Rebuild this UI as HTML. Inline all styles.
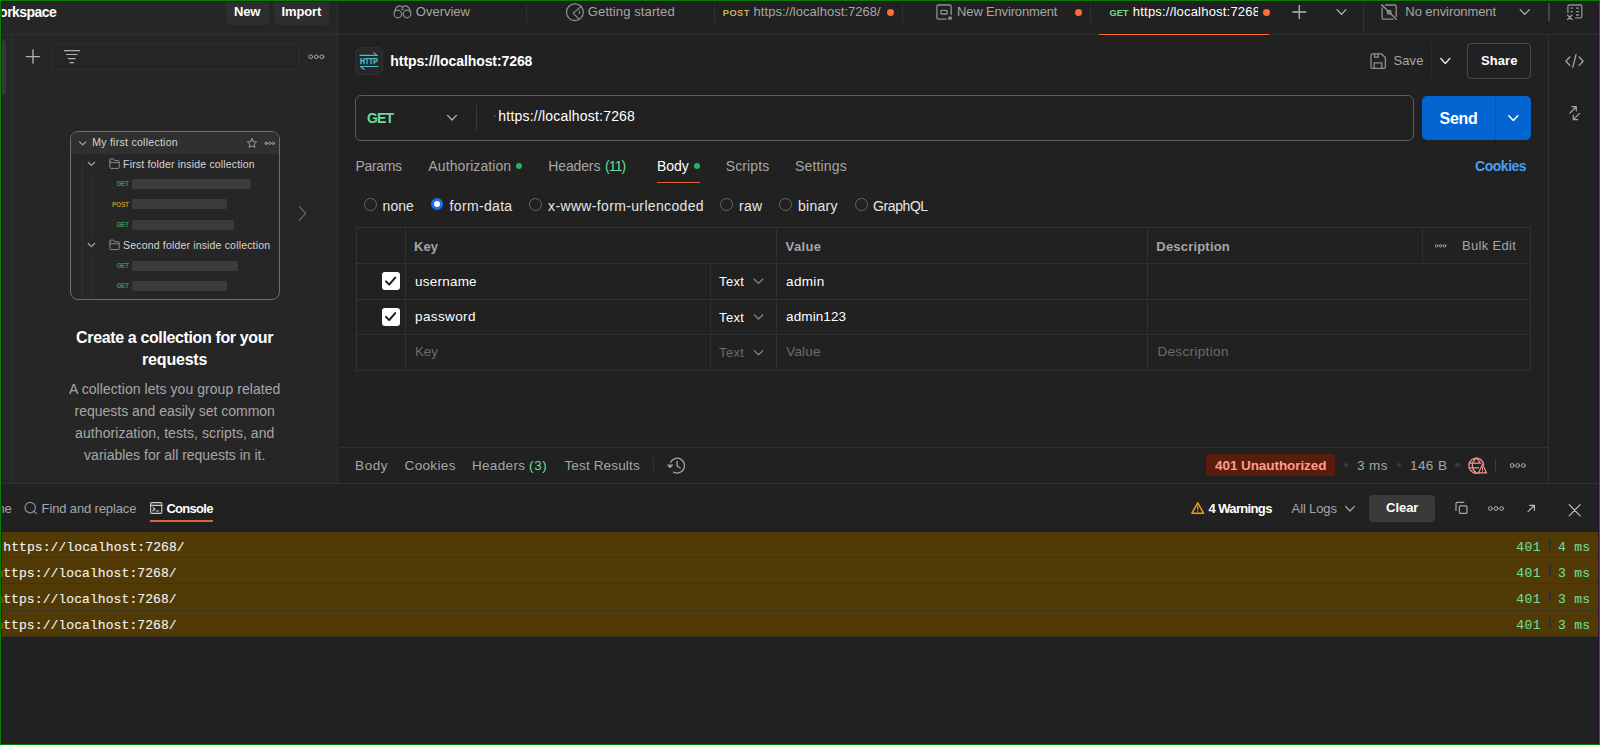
<!DOCTYPE html>
<html lang="en"><head><meta charset="utf-8"><title>Postman</title>
<style>
html,body{margin:0;padding:0;background:#212121;}
body{width:1600px;height:745px;overflow:hidden;}
#app{position:relative;width:1600px;height:745px;overflow:hidden;background:#212121;font-family:"Liberation Sans",sans-serif;}
.t{position:absolute;white-space:pre;line-height:1;}
.s{font-family:"Liberation Sans",sans-serif;}
.m{font-family:"Liberation Mono",monospace;-webkit-text-stroke:0.12px currentColor;}
.b{position:absolute;box-sizing:border-box;}
svg{position:absolute;overflow:visible;}
.ln{position:absolute;background:#303030;}

</style></head>
<body>
<div id="app">
<!-- panels -->
<div class="b" style="left:0;top:0;width:337px;height:483px;background:#262626;"></div>
<!-- horizontal line under top bar -->
<div class="ln" style="left:0;top:34px;width:1600px;height:1px;"></div>
<!-- sidebar / main divider -->
<div class="ln" style="left:337px;top:0;width:1px;height:483px;"></div>
<!-- left rail -->
<div class="ln" style="left:11px;top:35px;width:1px;height:448px;"></div>
<div class="b" style="left:-4px;top:40px;width:10px;height:55px;background:#383838;border-radius:4px;"></div>
<!-- New / Import buttons -->
<div class="b" style="left:226px;top:0;width:43px;height:24.5px;background:#2e2e2e;border-radius:4px;"></div>
<div class="b" style="left:273.5px;top:0;width:55.5px;height:24.5px;background:#2e2e2e;border-radius:4px;"></div>
<!-- sidebar search -->
<div class="b" style="left:51px;top:43px;width:247.5px;height:26.5px;border:1px solid #2f2f2f;border-radius:3px;background:#252525;"></div>
<!-- card -->
<div class="b" style="left:70px;top:131px;width:210px;height:169px;border:1px solid #6e6e6e;border-radius:8px;overflow:hidden;background:#262626;">
  <div class="b" style="left:0;top:0;width:209px;height:21.5px;background:#303030;"></div>
  <div class="b" style="left:11px;top:21.5px;width:1px;height:150px;background:#2f2f2f;"></div>
  <div class="b" style="left:20px;top:42px;width:1px;height:62px;background:#303030;"></div>
  <div class="b" style="left:20px;top:123.5px;width:1px;height:50px;background:#303030;"></div>
</div>
<div class="b" style="left:131.9px;top:179px;width:119.4px;height:10px;background:#3b3b3b;border-radius:2px;"></div>
<div class="b" style="left:131.9px;top:199.3px;width:94.9px;height:10px;background:#3b3b3b;border-radius:2px;"></div>
<div class="b" style="left:131.9px;top:219.7px;width:102.3px;height:10px;background:#3b3b3b;border-radius:2px;"></div>
<div class="b" style="left:131.9px;top:260.8px;width:106.6px;height:10px;background:#3b3b3b;border-radius:2px;"></div>
<div class="b" style="left:131.9px;top:281.2px;width:94.9px;height:10px;background:#3b3b3b;border-radius:2px;"></div>

<!-- tab dividers -->
<div class="ln" style="left:526px;top:4px;width:1px;height:18px;background:#303030;"></div>
<div class="ln" style="left:714px;top:4px;width:1px;height:18px;background:#303030;"></div>
<div class="ln" style="left:902px;top:4px;width:1px;height:18px;background:#303030;"></div>
<div class="ln" style="left:1090px;top:4px;width:1px;height:18px;background:#303030;"></div>
<div class="ln" style="left:1363px;top:0;width:1px;height:34px;"></div>
<div class="ln" style="left:1547.5px;top:3px;width:2px;height:18px;background:#454545;"></div>
<!-- active tab underline -->
<div class="b" style="left:1099px;top:33.5px;width:170px;height:1.5px;background:#ff6c37;"></div>
<!-- tab dots -->
<div class="b" style="left:887px;top:8.5px;width:7px;height:7px;border-radius:50%;background:#ff6c37;"></div>
<div class="b" style="left:1074.7px;top:8.5px;width:7px;height:7px;border-radius:50%;background:#ff6c37;"></div>
<div class="b" style="left:1262.7px;top:8.5px;width:7px;height:7px;border-radius:50%;background:#ff6c37;"></div>

<!-- right vertical line -->
<div class="ln" style="left:1548px;top:35px;width:1px;height:448px;"></div>

<!-- HTTP icon box -->
<div class="b" style="left:355px;top:47px;width:28px;height:28px;background:#282828;border:1px solid #303030;border-radius:5px;"></div>
<!-- save divider, share -->
<div class="ln" style="left:1431px;top:43px;width:1px;height:35px;background:#2a2a2a;"></div>
<div class="b" style="left:1467px;top:43px;width:64px;height:36px;border:1px solid #4a4a4a;border-radius:4px;"></div>

<!-- URL bar -->
<div class="b" style="left:355px;top:95px;width:1058.7px;height:45.5px;border:1px solid #5c5c5c;border-radius:6px;"></div>
<div class="ln" style="left:476px;top:105px;width:1px;height:25.5px;background:#3a3a3a;"></div>
<div class="b" style="left:493.5px;top:115px;width:2px;height:2px;background:#555;border-radius:1px;"></div>
<!-- Send -->
<div class="b" style="left:1421.7px;top:96px;width:109.3px;height:43.5px;background:#0265d2;border-radius:5px;"></div>
<div class="ln" style="left:1495px;top:96px;width:1px;height:43.5px;background:#0a55ad;"></div>

<!-- req tab dots + underline -->
<div class="b" style="left:516px;top:163px;width:6px;height:6px;border-radius:50%;background:#1fb866;"></div>
<div class="b" style="left:693.5px;top:163px;width:6px;height:6px;border-radius:50%;background:#1fb866;"></div>
<div class="b" style="left:657px;top:181.6px;width:43px;height:1.6px;background:#e0623a;"></div>

<!-- radios -->
<div class="b" style="left:364px;top:198px;width:13px;height:13px;border:1px solid #666;border-radius:50%;"></div>
<div class="b" style="left:431.3px;top:198px;width:12px;height:12px;border:3.5px solid #1a6ff0;background:#fff;border-radius:50%;"></div>
<div class="b" style="left:529px;top:198px;width:13px;height:13px;border:1px solid #666;border-radius:50%;"></div>
<div class="b" style="left:720.2px;top:198px;width:13px;height:13px;border:1px solid #666;border-radius:50%;"></div>
<div class="b" style="left:778.7px;top:198px;width:13px;height:13px;border:1px solid #666;border-radius:50%;"></div>
<div class="b" style="left:854.5px;top:198px;width:13px;height:13px;border:1px solid #666;border-radius:50%;"></div>

<!-- table -->
<div class="ln" style="left:355px;top:227px;width:1176px;height:1px;"></div>
<div class="ln" style="left:355px;top:263px;width:1176px;height:1px;"></div>
<div class="ln" style="left:355px;top:299px;width:1176px;height:1px;"></div>
<div class="ln" style="left:355px;top:334px;width:1176px;height:1px;"></div>
<div class="ln" style="left:355px;top:370px;width:1176px;height:1px;"></div>
<div class="ln" style="left:355.5px;top:227px;width:1px;height:144px;"></div>
<div class="ln" style="left:404.5px;top:227px;width:1px;height:144px;"></div>
<div class="ln" style="left:709.5px;top:263px;width:1px;height:108px;"></div>
<div class="ln" style="left:776px;top:227px;width:1px;height:144px;"></div>
<div class="ln" style="left:1146.5px;top:227px;width:1px;height:144px;"></div>
<div class="ln" style="left:1422px;top:227px;width:1px;height:36px;"></div>
<div class="ln" style="left:1530px;top:227px;width:1px;height:144px;"></div>
<!-- checkboxes -->
<div class="b" style="left:381.5px;top:272px;width:18px;height:18px;background:#fff;border-radius:3px;"></div>
<div class="b" style="left:381.5px;top:307.5px;width:18px;height:18px;background:#fff;border-radius:3px;"></div>

<!-- response bar lines -->
<div class="ln" style="left:339px;top:447px;width:1209px;height:1px;"></div>
<div class="ln" style="left:0;top:483px;width:1600px;height:1px;"></div>
<div class="ln" style="left:653px;top:457px;width:1px;height:16px;background:#303030;"></div>
<!-- status badge -->
<div class="b" style="left:1206px;top:454px;width:129px;height:21.5px;background:#5a1c0d;border-radius:4px;"></div>
<div class="b" style="left:1344.2px;top:463.1px;width:4.2px;height:4.2px;border-radius:50%;background:#3a3a3a;"></div>
<div class="b" style="left:1396.9px;top:463.1px;width:4.2px;height:4.2px;border-radius:50%;background:#3a3a3a;"></div>
<div class="b" style="left:1455.4px;top:463.1px;width:4.2px;height:4.2px;border-radius:50%;background:#3a3a3a;"></div>
<div class="ln" style="left:1495px;top:458.5px;width:1px;height:14px;background:#3a3a3a;"></div>

<!-- bottom header -->
<div class="b" style="left:149.5px;top:520.3px;width:63.5px;height:1.5px;background:#e0623a;"></div>
<div class="b" style="left:1369px;top:495px;width:66px;height:26.5px;background:#3a3a3a;border-radius:4px;"></div>

<!-- console rows -->
<div class="b" style="left:0;top:532px;width:1600px;height:104.5px;background:#3a3420;"></div>
<div class="b" style="left:0;top:532px;width:1600px;height:25.3px;background:#513a05;"></div>
<div class="b" style="left:0;top:558.2px;width:1600px;height:25.3px;background:#513a05;"></div>
<div class="b" style="left:0;top:584.4px;width:1600px;height:25.3px;background:#513a05;"></div>
<div class="b" style="left:0;top:610.6px;width:1600px;height:25.6px;background:#513a05;"></div>
<div class="b" style="left:1548.6px;top:539px;width:2px;height:11px;background:#2f3138;"></div>
<div class="b" style="left:1548.6px;top:565px;width:2px;height:11px;background:#2f3138;"></div>
<div class="b" style="left:1548.6px;top:591px;width:2px;height:11px;background:#2f3138;"></div>
<div class="b" style="left:1548.6px;top:617px;width:2px;height:11px;background:#2f3138;"></div>
<svg class="ic" width="1600" height="745" viewBox="0 0 1600 745" style="left:0;top:0;z-index:5;" fill="none" stroke-linecap="round" stroke-linejoin="round">
<!-- sidebar plus -->
<g stroke="#b5b5b5" stroke-width="1.3"><path d="M26.4 56.6H39.6M33 50V63.2"/></g>
<!-- filter -->
<g stroke="#b0b0b0" stroke-width="1.2" stroke-linecap="butt"><path d="M63.8 50.6H79.9M65.9 54.5H77.4M67.9 58.7H75.6M69.6 62.6H73.9"/></g>
<!-- sidebar ooo -->
<g stroke="#a6a6a6" stroke-width="1"><circle cx="310.7" cy="56.8" r="1.9"/><circle cx="316.3" cy="56.8" r="1.9"/><circle cx="321.9" cy="56.8" r="1.9"/></g>
<!-- card chevrons -->
<g stroke="#a6a6a6" stroke-width="1.2"><path d="M79.6 141.8L82.7 144.9L85.8 141.8"/><path d="M88.2 162.3L91.4 165.4L94.6 162.3"/><path d="M88.2 243.5L91.4 246.6L94.6 243.5"/></g>
<!-- card folders -->
<g stroke="#8a8a8a" stroke-width="1"><path d="M109.9 160.1V167.4Q109.9 168.4 110.9 168.4H118.2Q119.2 168.4 119.2 167.4V161.6Q119.2 160.6 118.2 160.6H114.6L113.4 158.9H110.9Q109.9 158.9 109.9 160.1ZM109.9 162.6H119.2"/>
<path d="M109.9 241.3V248.6Q109.9 249.6 110.9 249.6H118.2Q119.2 249.6 119.2 248.6V242.8Q119.2 241.8 118.2 241.8H114.6L113.4 240.1H110.9Q109.9 240.1 109.9 241.3ZM109.9 243.8H119.2"/></g>
<!-- card star + ooo -->
<g stroke="#a6a6a6" stroke-width="0.9"><path d="M252 138.6L253.4 141.6L256.6 142L254.2 144.2L254.9 147.4L252 145.8L249.1 147.4L249.8 144.2L247.4 142L250.6 141.6Z"/>
<circle cx="266" cy="143.3" r="1.2"/><circle cx="269.6" cy="143.3" r="1.2"/><circle cx="273.2" cy="143.3" r="1.2"/></g>
<!-- sidebar right chevron -->
<path d="M299.3 206.4L305.6 213.3L299.3 220.2" stroke="#6b6b6b" stroke-width="1.2"/>

<!-- binoculars -->
<g stroke="#8f8f8f" stroke-width="1.2"><circle cx="397.9" cy="14" r="3.8"/><circle cx="407.1" cy="14" r="3.8"/><path d="M394.3 12.6C394.9 9 396.8 6 399.6 5.8C401 5.7 402 6.6 402.5 7.4C403 6.6 404 5.7 405.4 5.8C408.2 6 410.1 9 410.7 12.6"/><path d="M402 9.3H403" stroke-width="1.4"/></g>
<!-- getting started -->
<g stroke="#8f8f8f" stroke-width="1.2"><circle cx="574.9" cy="12.2" r="8.4"/><path d="M581.2 6.5L573.1 13.1L578.6 18.7M579.5 11.2V13.4"/></g>
<!-- env icon -->
<g stroke="#8f8f8f" stroke-width="1.3"><path d="M951.2 14.5V6.4Q951.2 5 949.8 5H938.3Q936.9 5 936.9 6.4V17.7Q936.9 19.1 938.3 19.1H946"/><rect x="940.9" y="10.4" width="6.2" height="3.6" rx="0.6"/><rect x="948.2" y="16.6" width="3.6" height="3.1" fill="#8f8f8f" stroke="none"/></g>
<!-- tab plus + chevron -->
<g stroke="#b5b5b5" stroke-width="1.3"><path d="M1292.8 12H1305.8M1299.3 5.5V18.5"/><path d="M1337 9.6L1341.5 14.4L1346 9.6"/></g>
<!-- no env -->
<g stroke="#8f8f8f" stroke-width="1.3"><path d="M1396.2 16.5V6.4Q1396.2 5 1394.8 5H1385.5M1382.1 8V17.7Q1382.1 19.1 1383.5 19.1H1393"/><rect x="1387.4" y="10.6" width="3.4" height="3.2" rx="0.5"/><path d="M1381.7 4.8L1396.4 19.4" stroke="#a0a0a0"/></g>
<g stroke="#b5b5b5" stroke-width="1.3"><path d="M1520.2 9.6L1524.8 14.4L1529.4 9.6"/></g>
<!-- top right icon -->
<g stroke="#8f8f8f" stroke-width="1.3"><path d="M1567.9 12.5V6.4Q1567.9 5 1569.3 5H1580.4Q1581.8 5 1581.8 6.4V16.4Q1581.8 17.8 1580.4 17.8H1575.5"/><path d="M1570.5 8.2H1573M1576 8.2H1579M1570.5 11.6H1573M1576 11.6H1579M1576 15H1579" stroke-linecap="butt"/><path d="M1567.6 15.2L1572 19.6M1572 15.2L1567.6 19.6" stroke="#b0b0b0" stroke-width="1.2"/></g>

<!-- HTTP icon arrows -->
<g stroke="#3ec1d3" stroke-width="1.1"><path d="M360 55.4H377.3M373.6 52.6L377.3 55.4"/><path d="M377.8 66.5H360.5M364 69.3L360.5 66.5"/></g>
<!-- save -->
<g stroke="#8f8f8f" stroke-width="1.3"><path d="M1371 55.2Q1371 53.8 1372.4 53.8H1381.4L1385.4 57.8V66.9Q1385.4 68.3 1384 68.3H1372.4Q1371 68.3 1371 66.9Z"/><path d="M1374.6 53.8V57.2H1378.2V53.8M1374.2 68.3V62.8H1381.8V68.3"/></g>
<path d="M1440.8 58.6L1445.3 63.4L1449.8 58.6" stroke="#e0e0e0" stroke-width="1.5"/>
<!-- code -->
<g stroke="#a6a6a6" stroke-width="1.3"><path d="M1569.8 57L1565.9 61.2L1569.8 65.4M1579.2 57L1583.1 61.2L1579.2 65.4M1576 54.6L1572.8 67.4"/></g>
<!-- expand -->
<g stroke="#a6a6a6" stroke-width="1.2"><path d="M1570 113L1576.3 106.7M1572 106.7H1576.3V111"/><path d="M1579.6 113.4L1573.3 119.7M1577.6 119.7H1573.3V115.4"/></g>
<!-- method chevron -->
<path d="M447.6 115.4L452 120L456.4 115.4" stroke="#b5b5b5" stroke-width="1.3"/>
<!-- send chevron -->
<path d="M1508.8 115.8L1513.3 120.4L1517.8 115.8" stroke="#ffffff" stroke-width="1.5"/>
<!-- table row chevrons -->
<g stroke="#8a8a8a" stroke-width="1.2"><path d="M754.2 279.2L758.5 283.4L762.8 279.2"/><path d="M754.2 314.8L758.5 319L762.8 314.8"/></g>
<path d="M754.2 350.6L758.5 354.8L762.8 350.6" stroke="#8a8a8a" stroke-width="1.2"/>
<!-- check marks -->
<g stroke="#1a1a1a" stroke-width="2"><path d="M386 281.4L389.2 284.6L395.2 277.6"/><path d="M386 316.9L389.2 320.1L395.2 313.1"/></g>
<!-- bulk ooo -->
<g stroke="#a6a6a6" stroke-width="0.9"><circle cx="1436.6" cy="245.8" r="1.3"/><circle cx="1440.6" cy="245.8" r="1.3"/><circle cx="1444.6" cy="245.8" r="1.3"/></g>
<!-- history -->
<g stroke="#a6a6a6" stroke-width="1.3"><path d="M670.6 462.2A7.4 7.4 0 1 1 673.6 472.1"/><path d="M677.1 461.4V466L680.2 468"/><path d="M667.8 465.2L670 468L672.6 465.2Z" fill="#a6a6a6" stroke-width="0.8"/></g>
<!-- globe warn -->
<g stroke="#f1968a" stroke-width="1.3" transform="translate(0.7 0)"><path d="M1478.6 472.6A7.5 7.5 0 1 1 1483 464.4"/><path d="M1475.6 458.2Q1471.6 461 1471.6 465.5Q1471.6 470 1475.6 472.8M1475.6 458.2Q1478.4 460.2 1479.2 462.8M1468.6 463.2H1480.2M1468.6 467.8H1478"/><path d="M1481.8 464.6L1485.9 472.9H1477.7Z" stroke-width="1.2" fill="#212121"/><path d="M1481.8 467.6V470" stroke-width="1"/><path d="M1481.8 471.3V471.5" stroke-width="1"/></g>
<!-- response ooo -->
<g stroke="#b0b0b0" stroke-width="1"><circle cx="1512.2" cy="465.5" r="1.9"/><circle cx="1517.8" cy="465.5" r="1.9"/><circle cx="1523.4" cy="465.5" r="1.9"/></g>
<!-- search -->
<g stroke="#8f8f8f" stroke-width="1.2"><circle cx="30.2" cy="507.6" r="5.2"/><path d="M34 511.4L36.6 513.6"/></g>
<!-- console icon -->
<g stroke="#d0d0d0" stroke-width="1.1"><rect x="150.6" y="502.6" width="11.2" height="10.8" rx="1.2"/><path d="M150.6 505.4H161.8M153 507.6L155 509.2L153 510.8M156.4 511H158.6"/></g>
<!-- warning triangle -->
<g stroke="#e8a20c" stroke-width="1.5"><path d="M1197.7 502.8L1203.6 513.3H1191.8Z"/><path d="M1197.7 506.4V509.6M1197.7 511.3V511.5" stroke-width="1.1"/></g>
<!-- all logs chevron -->
<path d="M1345.6 506.4L1350 511L1354.4 506.4" stroke="#a6a6a6" stroke-width="1.3"/>
<!-- copy -->
<g stroke="#a6a6a6" stroke-width="1.2"><rect x="1459.4" y="505.8" width="7.6" height="7.6" rx="1"/><path d="M1456 510.4V503.4Q1456 502.4 1457 502.4H1463.8"/></g>
<!-- bottom ooo -->
<g stroke="#b0b0b0" stroke-width="1"><circle cx="1490.4" cy="508.5" r="1.9"/><circle cx="1496" cy="508.5" r="1.9"/><circle cx="1501.6" cy="508.5" r="1.9"/></g>
<!-- arrow ne -->
<g stroke="#b5b5b5" stroke-width="1.2"><path d="M1528 511.6L1534.4 505.3M1529.6 505.3H1534.4V510.3"/></g>
<!-- close -->
<g stroke="#c0c0c0" stroke-width="1.2"><path d="M1569.2 504.6L1580.2 515.8M1580.2 504.6L1569.2 515.8"/></g>
<!-- HTTP label (real text) -->
<text x="360" y="64.4" font-family="Liberation Sans, sans-serif" font-weight="700" font-size="9.4" fill="#3ec1d3" stroke="#3ec1d3" stroke-width="0.25" textLength="17.8" lengthAdjust="spacingAndGlyphs">HTTP</text>
</svg>

<!-- green window frame -->
<div class="b" style="left:0;top:0;width:1600px;height:745px;border:1px solid #048004;border-right-width:1.3px;pointer-events:none;z-index:50;"></div>
<div class="b" style="left:1px;top:1px;width:1597.5px;height:743px;border:1px solid rgba(45,16,50,0.8);pointer-events:none;z-index:49;"></div>

<span class="t s" style="left:-0.90px;top:5.00px;font-size:14px;letter-spacing:-0.526px;color:#ffffff;font-weight:700;">orkspace</span>
<span class="t s" style="left:234.10px;top:5.00px;font-size:13px;letter-spacing:-0.217px;color:#ffffff;font-weight:700;">New</span>
<span class="t s" style="left:281.60px;top:5.00px;font-size:13px;letter-spacing:-0.131px;color:#ffffff;font-weight:700;">Import</span>
<span class="t s" style="left:415.85px;top:5.00px;font-size:13px;letter-spacing:-0.020px;color:#a6a6a6;">Overview</span>
<span class="t s" style="left:587.85px;top:5.00px;font-size:13px;letter-spacing:0.108px;color:#a6a6a6;">Getting started</span>
<span class="t s" style="left:722.85px;top:9.00px;font-size:9.3px;letter-spacing:0.413px;color:#c9b15f;font-weight:700;">POST</span>
<span class="t s" style="left:753.60px;top:5.00px;font-size:13px;letter-spacing:0.028px;color:#a6a6a6;width:128.4px;overflow:hidden;">https://localhost:7268/</span>
<span class="t s" style="left:957.10px;top:5.00px;font-size:13px;letter-spacing:-0.165px;color:#a6a6a6;">New Environment</span>
<span class="t s" style="left:1109.60px;top:9.00px;font-size:9.3px;letter-spacing:-0.162px;color:#6bdd9a;font-weight:700;">GET</span>
<span class="t s" style="left:1132.85px;top:5.00px;font-size:13px;letter-spacing:0.200px;color:#ffffff;width:125.2px;overflow:hidden;">https://localhost:7268</span>
<span class="t s" style="left:1405.35px;top:5.00px;font-size:13px;letter-spacing:-0.075px;color:#a6a6a6;">No environment</span>
<span class="t s" style="left:390.35px;top:54.00px;font-size:14px;letter-spacing:-0.089px;color:#ffffff;font-weight:700;">https://localhost:7268</span>
<span class="t s" style="left:1393.60px;top:54.00px;font-size:13px;letter-spacing:0.053px;color:#a6a6a6;">Save</span>
<span class="t s" style="left:1481.10px;top:54.00px;font-size:13px;letter-spacing:0.040px;color:#ffffff;font-weight:700;">Share</span>
<span class="t s" style="left:367.10px;top:111.00px;font-size:14px;letter-spacing:-0.866px;color:#6bdd9a;font-weight:700;">GET</span>
<span class="t s" style="left:498.35px;top:109.00px;font-size:14px;letter-spacing:0.202px;color:#ffffff;">https://localhost:7268</span>
<span class="t s" style="left:1439.60px;top:111.00px;font-size:16px;letter-spacing:-0.275px;color:#ffffff;font-weight:700;">Send</span>
<span class="t s" style="left:355.60px;top:159.00px;font-size:14px;letter-spacing:-0.347px;color:#a6a6a6;">Params</span>
<span class="t s" style="left:428.35px;top:159.00px;font-size:14px;letter-spacing:0.090px;color:#a6a6a6;">Authorization</span>
<span class="t s" style="left:548.35px;top:159.00px;font-size:14px;letter-spacing:-0.145px;color:#a6a6a6;">Headers</span>
<span class="t s" style="left:605.10px;top:159.00px;font-size:14px;letter-spacing:-0.936px;color:#6bdd9a;">(11)</span>
<span class="t s" style="left:657.10px;top:159.00px;font-size:14px;letter-spacing:-0.124px;color:#ffffff;">Body</span>
<span class="t s" style="left:725.85px;top:159.00px;font-size:14px;letter-spacing:0.084px;color:#a6a6a6;">Scripts</span>
<span class="t s" style="left:795.10px;top:159.00px;font-size:14px;letter-spacing:0.137px;color:#a6a6a6;">Settings</span>
<span class="t s" style="left:1475.10px;top:159.00px;font-size:14px;letter-spacing:-0.486px;color:#4a9cf7;font-weight:700;">Cookies</span>
<span class="t s" style="left:382.60px;top:199.00px;font-size:14px;letter-spacing:0.048px;color:#e6e6e6;">none</span>
<span class="t s" style="left:449.60px;top:199.00px;font-size:14px;letter-spacing:0.329px;color:#e6e6e6;">form-data</span>
<span class="t s" style="left:548.10px;top:199.00px;font-size:14px;letter-spacing:0.348px;color:#e6e6e6;">x-www-form-urlencoded</span>
<span class="t s" style="left:739.10px;top:199.00px;font-size:14px;letter-spacing:0.244px;color:#e6e6e6;">raw</span>
<span class="t s" style="left:798.10px;top:199.00px;font-size:14px;letter-spacing:0.232px;color:#e6e6e6;">binary</span>
<span class="t s" style="left:873.10px;top:199.00px;font-size:14px;letter-spacing:-0.424px;color:#e6e6e6;">GraphQL</span>
<span class="t s" style="left:414.10px;top:240.00px;font-size:13px;letter-spacing:-0.030px;color:#a6a6a6;font-weight:700;">Key</span>
<span class="t s" style="left:785.60px;top:240.00px;font-size:13px;letter-spacing:0.383px;color:#a6a6a6;font-weight:700;">Value</span>
<span class="t s" style="left:1156.30px;top:240.00px;font-size:13px;letter-spacing:0.198px;color:#a6a6a6;font-weight:700;">Description</span>
<span class="t s" style="left:1461.90px;top:239.00px;font-size:13px;letter-spacing:0.336px;color:#a6a6a6;">Bulk Edit</span>
<span class="t s" style="left:415.10px;top:275.00px;font-size:13.5px;letter-spacing:0.215px;color:#ffffff;">username</span>
<span class="t s" style="left:719.10px;top:275.00px;font-size:13px;letter-spacing:0.319px;color:#ffffff;">Text</span>
<span class="t s" style="left:786.10px;top:275.00px;font-size:13.5px;letter-spacing:0.330px;color:#ffffff;">admin</span>
<span class="t s" style="left:415.10px;top:310.00px;font-size:13.5px;letter-spacing:0.360px;color:#ffffff;">password</span>
<span class="t s" style="left:719.10px;top:311.00px;font-size:13px;letter-spacing:0.319px;color:#ffffff;">Text</span>
<span class="t s" style="left:786.10px;top:310.00px;font-size:13.5px;letter-spacing:0.100px;color:#ffffff;">admin123</span>
<span class="t s" style="left:415.10px;top:345.00px;font-size:13.5px;letter-spacing:-0.233px;color:#6b6b6b;">Key</span>
<span class="t s" style="left:719.10px;top:346.00px;font-size:13px;letter-spacing:0.319px;color:#6b6b6b;">Text</span>
<span class="t s" style="left:786.30px;top:345.00px;font-size:13.5px;letter-spacing:0.142px;color:#6b6b6b;">Value</span>
<span class="t s" style="left:1157.40px;top:345.00px;font-size:13.5px;letter-spacing:0.347px;color:#6b6b6b;">Description</span>
<span class="t s" style="left:355.10px;top:459.00px;font-size:13.5px;letter-spacing:0.573px;color:#a6a6a6;">Body</span>
<span class="t s" style="left:404.60px;top:459.00px;font-size:13.5px;letter-spacing:0.336px;color:#a6a6a6;">Cookies</span>
<span class="t s" style="left:471.90px;top:459.00px;font-size:13.5px;letter-spacing:0.345px;color:#a6a6a6;">Headers</span>
<span class="t s" style="left:529.10px;top:459.00px;font-size:13.5px;letter-spacing:0.600px;color:#6bdd9a;">(3)</span>
<span class="t s" style="left:564.40px;top:459.00px;font-size:13.5px;letter-spacing:0.161px;color:#a6a6a6;">Test Results</span>
<span class="t s" style="left:1215.10px;top:459.00px;font-size:13.5px;letter-spacing:-0.082px;color:#ff9c8c;font-weight:700;">401 Unauthorized</span>
<span class="t s" style="left:1357.10px;top:459.00px;font-size:13.5px;letter-spacing:0.345px;color:#a6a6a6;">3 ms</span>
<span class="t s" style="left:1410.10px;top:459.00px;font-size:13.5px;letter-spacing:0.380px;color:#a6a6a6;">146 B</span>
<span class="t s" style="left:-2.40px;top:502.00px;font-size:13px;letter-spacing:-0.369px;color:#a6a6a6;">ne</span>
<span class="t s" style="left:41.60px;top:502.00px;font-size:13px;letter-spacing:-0.136px;color:#a6a6a6;">Find and replace</span>
<span class="t s" style="left:166.40px;top:502.00px;font-size:13px;letter-spacing:-0.716px;color:#ffffff;font-weight:700;">Console</span>
<span class="t s" style="left:1208.60px;top:502.00px;font-size:13px;letter-spacing:-0.644px;color:#ffffff;font-weight:700;">4 Warnings</span>
<span class="t s" style="left:1291.60px;top:502.00px;font-size:13px;letter-spacing:-0.136px;color:#a6a6a6;">All Logs</span>
<span class="t s" style="left:1386.10px;top:501.00px;font-size:13px;letter-spacing:-0.058px;color:#ffffff;font-weight:700;">Clear</span>
<span class="t m" style="left:3.30px;top:541.00px;font-size:13px;letter-spacing:0.085px;color:#f2f2f2;">https://localhost:7268/</span>
<span class="t m" style="left:-4.70px;top:567.00px;font-size:13px;letter-spacing:0.085px;color:#f2f2f2;">https://localhost:7268/</span>
<span class="t m" style="left:-4.70px;top:593.00px;font-size:13px;letter-spacing:0.085px;color:#f2f2f2;">https://localhost:7268/</span>
<span class="t m" style="left:-4.70px;top:619.00px;font-size:13px;letter-spacing:0.085px;color:#f2f2f2;">https://localhost:7268/</span>
<span class="t m" style="left:1516.20px;top:541.00px;font-size:13px;letter-spacing:0.447px;color:#6bdd9a;">401</span>
<span class="t m" style="left:1557.90px;top:541.00px;font-size:13px;letter-spacing:0.327px;color:#6bdd9a;">4 ms</span>
<span class="t m" style="left:1516.20px;top:567.00px;font-size:13px;letter-spacing:0.447px;color:#6bdd9a;">401</span>
<span class="t m" style="left:1557.90px;top:567.00px;font-size:13px;letter-spacing:0.327px;color:#6bdd9a;">3 ms</span>
<span class="t m" style="left:1516.20px;top:593.00px;font-size:13px;letter-spacing:0.447px;color:#6bdd9a;">401</span>
<span class="t m" style="left:1557.90px;top:593.00px;font-size:13px;letter-spacing:0.327px;color:#6bdd9a;">3 ms</span>
<span class="t m" style="left:1516.20px;top:619.00px;font-size:13px;letter-spacing:0.447px;color:#6bdd9a;">401</span>
<span class="t m" style="left:1557.90px;top:619.00px;font-size:13px;letter-spacing:0.327px;color:#6bdd9a;">3 ms</span>
<span class="t s" style="left:76.10px;top:330.00px;font-size:16px;letter-spacing:-0.366px;color:#ffffff;font-weight:700;">Create a collection for your</span>
<span class="t s" style="left:142.10px;top:352.00px;font-size:16px;letter-spacing:-0.200px;color:#ffffff;font-weight:700;">requests</span>
<span class="t s" style="left:69.10px;top:382.00px;font-size:14px;letter-spacing:0.057px;color:#a6a6a6;">A collection lets you group related</span>
<span class="t s" style="left:74.60px;top:404.00px;font-size:14px;letter-spacing:-0.016px;color:#a6a6a6;">requests and easily set common</span>
<span class="t s" style="left:75.10px;top:426.00px;font-size:14px;letter-spacing:0.073px;color:#a6a6a6;">authorization, tests, scripts, and</span>
<span class="t s" style="left:84.10px;top:448.00px;font-size:14px;letter-spacing:-0.000px;color:#a6a6a6;">variables for all requests in it.</span>
<span class="t s" style="left:92.20px;top:137.00px;font-size:10.5px;letter-spacing:0.276px;color:#d6d6d6;">My first collection</span>
<span class="t s" style="left:123.10px;top:159.00px;font-size:10.5px;letter-spacing:0.171px;color:#d6d6d6;">First folder inside collection</span>
<span class="t s" style="left:123.10px;top:240.00px;font-size:10.5px;letter-spacing:0.169px;color:#d6d6d6;">Second folder inside collection</span>
<span class="t s" style="left:116.40px;top:181.00px;font-size:6.5px;letter-spacing:-0.388px;color:#3b8f57;font-weight:700;">GET</span>
<span class="t s" style="left:112.00px;top:202.00px;font-size:6.5px;letter-spacing:-0.234px;color:#b88a2c;font-weight:700;">POST</span>
<span class="t s" style="left:116.40px;top:222.00px;font-size:6.5px;letter-spacing:-0.388px;color:#3b8f57;font-weight:700;">GET</span>
<span class="t s" style="left:116.40px;top:263.00px;font-size:6.5px;letter-spacing:-0.388px;color:#3b8f57;font-weight:700;">GET</span>
<span class="t s" style="left:116.40px;top:283.00px;font-size:6.5px;letter-spacing:-0.388px;color:#3b8f57;font-weight:700;">GET</span>
</div>
</body></html>
